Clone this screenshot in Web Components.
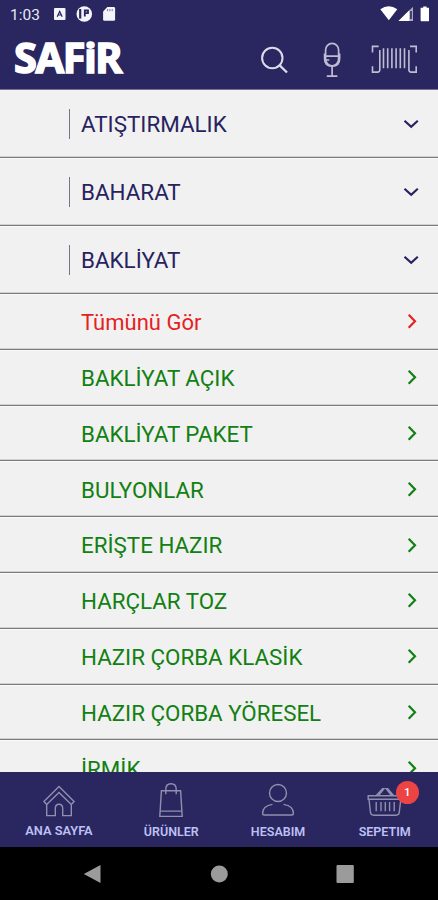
<!DOCTYPE html>
<html lang="tr">
<head>
<meta charset="UTF-8">
<meta name="viewport" content="width=device-width, initial-scale=1.0">
<title>Safir</title>
<style>
    html, body { margin: 0; height: 100%; }
    body { font-family: Roboto, 'Liberation Sans', sans-serif; overflow: hidden; }
</style>
</head>
<body>
<safir-app>
    <status-bar slot="top">1:03</status-bar>
    <safir-header slot="top">SAFiR</safir-header>

    <category-row>ATIŞTIRMALIK</category-row>
    <category-row>BAHARAT</category-row>
    <category-row>BAKLİYAT</category-row>
    <sub-row all>Tümünü Gör</sub-row>
    <sub-row>BAKLİYAT AÇIK</sub-row>
    <sub-row>BAKLİYAT PAKET</sub-row>
    <sub-row>BULYONLAR</sub-row>
    <sub-row>ERİŞTE HAZIR</sub-row>
    <sub-row>HARÇLAR TOZ</sub-row>
    <sub-row>HAZIR ÇORBA KLASİK</sub-row>
    <sub-row>HAZIR ÇORBA YÖRESEL</sub-row>
    <sub-row>İRMİK</sub-row>

    <tab-bar slot="bottom">
        <tab-item icon="home">ANA SAYFA</tab-item>
        <tab-item icon="bag">ÜRÜNLER</tab-item>
        <tab-item icon="user">HESABIM</tab-item>
        <tab-item icon="basket" badge="1">SEPETIM</tab-item>
    </tab-bar>
    <android-nav slot="bottom"></android-nav>
</safir-app>

<script>
class SafirApp extends HTMLElement {
    constructor() {
        super();
        const shadow = this.attachShadow({ mode: 'open' });
        shadow.innerHTML = `
            <style>
                :host {
                    display: flex;
                    flex-direction: column;
                    height: 100vh;
                    background: #f1f1f1;
                }
                main { flex: 1; min-height: 0; overflow: hidden; }
            </style>
            <slot name="top"></slot>
            <main><slot></slot></main>
            <slot name="bottom"></slot>
        `;
    }
}
customElements.define('safir-app', SafirApp);

class StatusBar extends HTMLElement {
    constructor() {
        super();
        const shadow = this.attachShadow({ mode: 'open' });
        shadow.innerHTML = `
            <style>
                :host {
                    display: flex;
                    align-items: center;
                    justify-content: space-between;
                    height: 28px;
                    padding: 0 9px 0 10px;
                    box-sizing: border-box;
                    background: #2a265f;
                    color: #e8e8f4;
                    font-size: 15.5px;
                }
                .left { display: flex; align-items: center; }
                .time { width: 43px; padding-top: 1px; }
                svg { display: block; }
            </style>
            <div class="left">
                <span class="time"><slot></slot></span>
                <svg width="64" height="28" viewBox="53 0 64 28">
                    <rect x="54" y="8" width="11.5" height="12" rx="1" fill="#f4f4fb"/>
                    <path d="M57.2 16.8 59.7 11.4l2.5 5.4M58.2 15h3" fill="none" stroke="#2a265f" stroke-width="1.2"/>
                    <circle cx="84.3" cy="14" r="7.8" fill="#f4f4fb"/>
                    <path d="M81.3 9h-2.2v9.6h2.2z" fill="#2a265f"/>
                    <path d="M84.8 16.5v-6h3.2v2.6h-3" fill="none" stroke="#2a265f" stroke-width="1.8"/>
                    <path d="M107.3 7h6.4q1.4 0 1.4 1.4v11q0 1.4-1.4 1.4h-9.2q-1.4 0-1.4-1.4v-8z" fill="#f4f4fb"/>
                    <path d="M107.6 9v2.2M109.9 9v2.2M112.2 9v2.2" stroke="#2a265f" stroke-width="1" opacity=".6"/>
                </svg>
            </div>
            <svg width="50" height="28" viewBox="379 0 50 28">
                <path d="M380.3 9.2Q388.7 3.2 397.3 9.2L388.8 20.3z" fill="#fff"/>
                <path d="M413 6.7V21h-14.5z" fill="#a9a7c2"/>
                <path d="M409.3 10.3V21H398.5z" fill="#fff"/>
                <path d="M411 11v8" stroke="#2a265f" stroke-width="1.6"/>
                <path d="M423.2 6.5h3.4v1.3h2.6v12.7q0 .8-.8.8h-7q-.8 0-.8-.8V7.8h2.6z" fill="#fff"/>
            </svg>
        `;
    }
}
customElements.define('status-bar', StatusBar);

class SafirHeader extends HTMLElement {
    constructor() {
        super();
        const shadow = this.attachShadow({ mode: 'open' });
        shadow.innerHTML = `
            <style>
                :host {
                    display: flex;
                    align-items: center;
                    justify-content: space-between;
                    height: 62px;
                    padding: 0 20px 0 13px;
                    box-sizing: border-box;
                    background: #2a265f;
                    border-bottom: 1.5px solid #777298;
                }
                .logo {
                    font-family: 'Noto Sans', 'Open Sans', sans-serif;
                    font-weight: 700;
                    font-size: 41.5px;
                    line-height: 56px;
                    padding: 0 0 3px 1px;
                    letter-spacing: -1.4px;
                    color: #fff;
                    -webkit-text-stroke: 1.6px #fff;
                    white-space: nowrap;
                }
                svg { display: block; }
                .icons { display: flex; align-items: center; }
                .icons svg { fill: none; stroke: #dcdbea; }
            </style>
            <span class="logo"><slot></slot></span>
            <div class="icons">
                <svg width="58" height="60" viewBox="260 28 58 60" stroke-width="2">
                    <circle cx="272.3" cy="57" r="10.2"/>
                    <path d="M279.7 64.4 287 71.5" stroke-width="2.3"/>
                </svg>
                <svg width="52" height="60" viewBox="318 28 52 60" stroke-width="1.7" style="stroke:#bfbdd4">
                    <rect x="325.6" y="42.4" width="13" height="22.4" rx="6.5"/>
                    <path d="M325.4 55.2h13.4M325.5 59h3.8"/>
                    <path d="M324.6 52.5v5.2q0 7.4 7.5 7.4t7.5-7.4V52.5M332.1 65.4v9.3M326.8 75.2h10.6"/>
                </svg>
                <svg width="48" height="60" viewBox="370 28 48 60" stroke-width="1.6" style="stroke:#bfbdd4">
                    <path d="M378.7 45.4h-6.2v6M410 45.4h6.2v6M372.5 65.2v5.9h5q2.3 0 2.3-2.3V49M416.2 65.2v5.9h-5q-2.3 0-2.3-2.3V49"/>
                    <path d="M383.5 47.3v20M387.7 47.3v20M391.9 47.3v20M396.1 47.3v20M400.3 47.3v20M404.5 47.3v20"/>
                </svg>
            </div>
        `;
    }
}
customElements.define('safir-header', SafirHeader);

class CategoryRow extends HTMLElement {
    constructor() {
        super();
        const shadow = this.attachShadow({ mode: 'open' });
        shadow.innerHTML = `
            <style>
                :host {
                    display: flex;
                    align-items: center;
                    height: 68px;
                    padding: 0 18px 0 69px;
                    box-sizing: border-box;
                    border-bottom: 1px solid #7b7b7b;
                    box-shadow: 0 1px 0 #fafafa, inset 0 -1px 0 #d0d0d0;
                    color: #28225f;
                    font-size: 22.4px;
                    line-height: 30px;
                }
                .label {
                    flex: 1;
                    border-left: 1.5px solid #77738f;
                    padding-left: 11px;
                    white-space: nowrap;
                }
                svg { fill: none; stroke: #28225f; stroke-width: 2.2; }
            </style>
            <span class="label"><slot></slot></span>
            <svg width="18" height="18" viewBox="0 0 18 18"><path d="M2.5 5.8 9.2 11.8 15.8 5.8"/></svg>
        `;
    }
}
customElements.define('category-row', CategoryRow);

class SubRow extends HTMLElement {
    constructor() {
        super();
        const shadow = this.attachShadow({ mode: 'open' });
        shadow.innerHTML = `
            <style>
                :host {
                    display: flex;
                    align-items: center;
                    justify-content: space-between;
                    height: 55.8px;
                    padding: 0 18px 0 81px;
                    box-sizing: border-box;
                    border-bottom: 1px solid #7b7b7b;
                    box-shadow: 0 1px 0 #fafafa, inset 0 -1px 0 #d0d0d0;
                    color: #128012;
                    font-size: 22.35px;
                    white-space: nowrap;
                }
                .label { padding-top: 1.6px; }
                :host([all]) { color: #e52222; }
                :host([all]) .label { font-size: 22px; }
                svg { fill: none; stroke: currentColor; stroke-width: 2.2; }
            </style>
            <span class="label"><slot></slot></span>
            <svg width="18" height="18" viewBox="0 0 18 18"><path d="M6.7 2.7 13 9.2 6.7 15.7"/></svg>
        `;
    }
}
customElements.define('sub-row', SubRow);

class TabBar extends HTMLElement {
    constructor() {
        super();
        const shadow = this.attachShadow({ mode: 'open' });
        shadow.innerHTML = `
            <style>
                :host {
                    display: grid;
                    grid-template-columns: 118px repeat(3, 106.7px);
                    height: 75px;
                    background: #2a265f;
                }
            </style>
            <slot></slot>
        `;
    }
}
customElements.define('tab-bar', TabBar);

const tabIcons = {
    home: '<path d="M3.9 22.5 19 7.6 34.1 22.5 31.3 25.5 19 13.5 6.7 25.5zM6.7 25.5V36.6H15.3V29.5Q15.3 25.2 19 25.2T22.7 29.5V36.6H31.3V25.5"/>',
    bag: '<path d="M9.4 11.8H28.6L30.2 37.4H7.8zM8.1 32.1H29.9M13.8 15.2V10.2Q13.8 4.7 19 4.7T24.2 10.2V15.2"/>',
    user: '<circle cx="19" cy="14" r="8.5"/><path d="M13.5 25.4Q3.6 26.8 3.6 34.5Q3.6 36 5.2 36H32.8Q34.4 36 34.4 34.5Q34.4 26.8 24.5 25.4"/>',
    basket: '<path d="M2.2 16.7H35.7V20.2H34.8L33.3 33Q33 36.2 30 36.2H7.7Q4.7 36.2 4.4 33L3 20.2H2.2zM3.5 20.2H34.5M10.3 16.5 16.5 9.7H18L12.5 16.5M27.5 16.5 21.7 9.7H20.2L25.5 16.5M10.2 23V32.3M15 23V32.3M19.3 23V32.3M23.6 23V32.3M28.2 23V32.3"/>'
};

class TabItem extends HTMLElement {
    constructor() {
        super();
        const shadow = this.attachShadow({ mode: 'open' });
        const badge = this.getAttribute('badge');
        shadow.innerHTML = `
            <style>
                :host {
                    display: flex;
                    flex-direction: column;
                    align-items: center;
                    padding-top: 7px;
                    color: #bdc0f5;
                    font-size: 12.5px;
                    font-weight: 600;
                    line-height: 18px;
                    white-space: nowrap;
                }
                :host([icon="home"]) { line-height: 16px; font-size: 12.8px; }
                .icon { position: relative; width: 38px; height: 44px; }
                svg { display: block; fill: none; stroke: #918fae; stroke-width: 1.4; }
                .badge {
                    position: absolute;
                    left: 30px;
                    top: 2px;
                    width: 23px;
                    height: 23px;
                    border-radius: 50%;
                    background: #ec4444;
                    color: #fff;
                    font-size: 11.5px;
                    font-weight: 500;
                    line-height: 23px;
                    text-align: center;
                }
            </style>
            <div class="icon">
                <svg width="38" height="44" viewBox="0 0 38 44">${tabIcons[this.getAttribute('icon')]}</svg>
                ${badge ? `<span class="badge">${badge}</span>` : ''}
            </div>
            <slot></slot>
        `;
    }
}
customElements.define('tab-item', TabItem);

class AndroidNav extends HTMLElement {
    constructor() {
        super();
        const shadow = this.attachShadow({ mode: 'open' });
        shadow.innerHTML = `
            <style>
                :host {
                    display: flex;
                    align-items: center;
                    justify-content: space-between;
                    height: 53px;
                    padding: 0 83px;
                    box-sizing: border-box;
                    background: #000;
                }
                svg { fill: #9b9b9b; }
            </style>
            <svg width="19" height="20" viewBox="0 0 19 20"><path d="M.8 10 17.5 1V19z"/></svg>
            <svg width="18" height="18" viewBox="0 0 18 18"><circle cx="9.3" cy="9" r="8.5"/></svg>
            <svg width="19" height="18" viewBox="0 0 19 18"><rect x=".5" width="17.3" height="18" rx="1"/></svg>
        `;
    }
}
customElements.define('android-nav', AndroidNav);
</script>
</body>
</html>
